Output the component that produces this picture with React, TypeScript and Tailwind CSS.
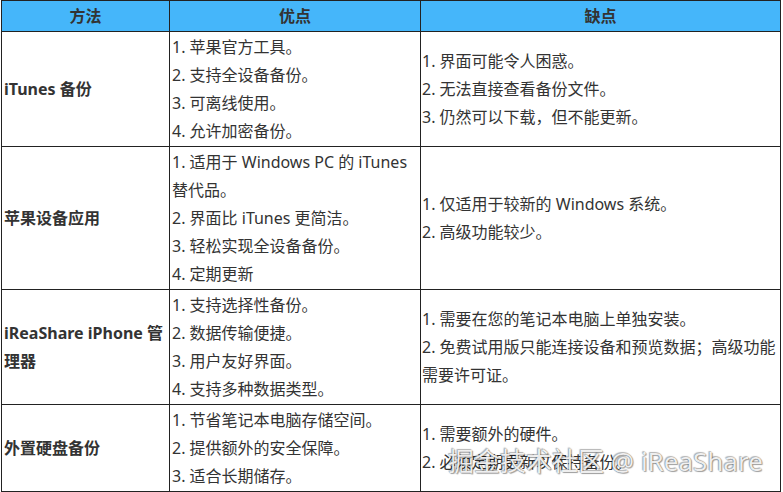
// Comparison table of iPhone backup methods, with the site watermark in the corner.

type Row = {
  method: string[];
  pros: string[];
  cons: string[];
};

const ROWS: Row[] = [
  {
    method: ['iTunes 备份'],
    pros: ['1. 苹果官方工具。', '2. 支持全设备备份。', '3. 可离线使用。', '4. 允许加密备份。'],
    cons: ['1. 界面可能令人困惑。', '2. 无法直接查看备份文件。', '3. 仍然可以下载，但不能更新。'],
  },
  {
    method: ['苹果设备应用'],
    pros: [
      '1. 适用于 Windows PC 的 iTunes',
      '替代品。',
      '2. 界面比 iTunes 更简洁。',
      '3. 轻松实现全设备备份。',
      '4. 定期更新',
    ],
    cons: ['1. 仅适用于较新的 Windows 系统。', '2. 高级功能较少。'],
  },
  {
    method: ['iReaShare iPhone 管', '理器'],
    pros: ['1. 支持选择性备份。', '2. 数据传输便捷。', '3. 用户友好界面。', '4. 支持多种数据类型。'],
    cons: [
      '1. 需要在您的笔记本电脑上单独安装。',
      '2. 免费试用版只能连接设备和预览数据；高级功能',
      '需要许可证。',
    ],
  },
  {
    method: ['外置硬盘备份'],
    pros: ['1. 节省笔记本电脑存储空间。', '2. 提供额外的安全保障。', '3. 适合长期储存。'],
    cons: ['1. 需要额外的硬件。', '2. 必须定期更新以保持备份。'],
  },
];

function Lines({ lines }: { lines: string[] }) {
  return (
    <>
      {lines.map((l) => (
        <span key={l} className="block whitespace-nowrap">
          {l}
        </span>
      ))}
    </>
  );
}

export default function App() {
  return (
    <div
      className="relative h-[492px] w-[783px] overflow-hidden bg-white text-[16px] text-[#333]"
      style={{ fontFamily: '"Noto Sans", "Noto Sans CJK SC", sans-serif' }}
    >
      <div className="ml-[1px] grid w-[780px] grid-cols-[168px_251px_360px] border-l border-t border-[#222]">
        {['方法', '优点', '缺点'].map((h) => (
          <div
            key={h}
            className="flex h-[31px] items-center justify-center border-b border-r border-[#222] bg-[#45b6fa] font-bold leading-none"
          >
            {h}
          </div>
        ))}

        {ROWS.map((row) => (
          <div key={row.method[0]} className="contents">
            <div className="flex flex-col justify-center border-b border-r border-[#222] px-[2px] py-[1px] font-bold leading-[28px]">
              <Lines lines={row.method} />
            </div>
            <div className="flex flex-col justify-center border-b border-r border-[#222] px-[2px] py-[1px] leading-[28px]">
              <Lines lines={row.pros} />
            </div>
            <div className="flex flex-col justify-center border-b border-r border-[#222] px-[1px] py-[1px] leading-[28px]">
              <Lines lines={row.cons} />
            </div>
          </div>
        ))}
      </div>

      {/* watermark */}
      <div
        className="pointer-events-none absolute left-[448px] top-[448px] whitespace-nowrap text-[26px] leading-none text-white/90"
        style={{
          textShadow:
            '0 0 1px rgba(0,0,0,0.55), 1px 1px 1px rgba(0,0,0,0.35), -1px -1px 1px rgba(0,0,0,0.25)',
        }}
      >
        掘金技术社区 @ iReaShare
      </div>
    </div>
  );
}
